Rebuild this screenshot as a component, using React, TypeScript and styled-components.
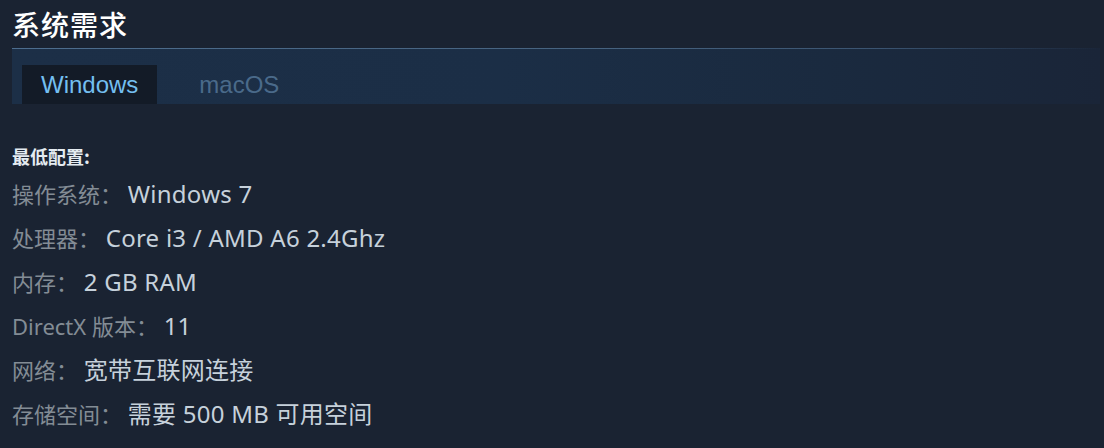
import React from "react";
import styled, { createGlobalStyle } from "styled-components";

const Global = createGlobalStyle`
  html, body { margin: 0; padding: 0; background: #1a2332; }
  body { width: 1104px; height: 448px; overflow: hidden; }
`;

const Page = styled.div`
  padding: 0 0 0 12px;
  font-family: "Noto Sans", "Noto Sans CJK SC", sans-serif;
  background: #1a2332;
  height: 448px;
  box-sizing: border-box;
`;

const Title = styled.h2`
  margin: 7px 0 0 0;
  font-family: "Noto Sans CJK SC", sans-serif;
  font-size: 28px;
  line-height: 34px;
  font-weight: 500;
  color: #ffffff;
  letter-spacing: 1px;
  height: 41px;
`;

const TabBar = styled.div`
  display: flex;
  align-items: flex-end;
  height: 56px;
  margin-right: 4px;
  box-sizing: border-box;
  padding-left: 10px;
  border-top: 1px solid transparent;
  border-image: linear-gradient(90deg, #4d6d8e 0%, #46627f 55%, #3a5370 80%, rgba(40, 60, 85, 0) 100%) 1;
  background: linear-gradient(90deg, #1c2f47 0%, #1b2e46 45%, #1a2a3f 75%, #1a2538 100%);
`;

const Tab = styled.div<{ $active?: boolean }>`
  display: flex;
  align-items: center;
  height: 39px;
  padding: 0 19px;
  margin-right: ${(p) => (p.$active ? "23px" : "0")};
  font-family: "Liberation Sans", Arial, sans-serif;
  font-size: 24px;
  color: ${(p) => (p.$active ? "#74bff0" : "#4a6a8a")};
  background: ${(p) => (p.$active ? "#131b27" : "transparent")};
`;

const Section = styled.div`
  margin-top: 40px;
`;

const Heading = styled.div`
  font-family: "Noto Sans CJK SC", sans-serif;
  font-size: 18px;
  line-height: 24px;
  font-weight: 700;
  color: #e4ebf1;
  margin-bottom: 4px;
`;

const List = styled.ul`
  list-style: none;
  margin: 0;
  padding: 0;
`;

const Row = styled.li`
  font-size: 22px;
  line-height: 44px;
  height: 44px;
  color: #c3ced8;
  white-space: nowrap;
`;

const Label = styled.span`
  font-family: "Noto Sans", "Noto Sans CJK SC", sans-serif;
  font-size: 22px;
  color: #838c95;
`;

const Value = styled.span`
  font-family: "Noto Sans", "Noto Sans CJK SC", sans-serif;
  font-size: 24px;
  letter-spacing: 0.25px;
  color: #c6d1db;
`;

const specs: [string, string][] = [
  ["操作系统：", "Windows 7"],
  ["处理器：", "Core i3 / AMD A6 2.4Ghz"],
  ["内存：", "2 GB RAM"],
  ["DirectX 版本：", "11"],
  ["网络：", "宽带互联网连接"],
  ["存储空间：", "需要 500 MB 可用空间"],
];

export default function App() {
  return (
    <>
      <Global />
      <Page>
        <Title>系统需求</Title>
        <TabBar>
          <Tab $active>Windows</Tab>
          <Tab>macOS</Tab>
        </TabBar>
        <Section>
          <Heading>最低配置:</Heading>
          <List>
            {specs.map(([k, v]) => (
              <Row key={k}>
                <Label>{k}</Label> <Value>{v}</Value>
              </Row>
            ))}
          </List>
        </Section>
      </Page>
    </>
  );
}
